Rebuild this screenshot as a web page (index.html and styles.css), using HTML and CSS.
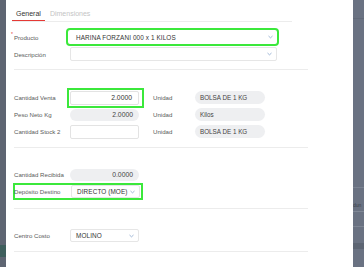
FILE: index.html
```html
<!DOCTYPE html>
<html>
<head>
<meta charset="utf-8">
<link rel="stylesheet" href="styles.css">
</head>
<body>
<div class="page">
  <div class="side side-left">
    <div class="teal"></div>
  </div>
  <div class="modal">
    <div class="tabs">
      <span class="tab active">General</span>
      <span class="tab">Dimensiones</span>
    </div>

    <div class="section s1">
      <div class="row r-prod">
        <span class="label"><span class="req">*</span>Producto</span>
        <div class="select wide hl">HARINA FORZANI 000 x 1 KILOS<svg class="chev" viewBox="0 0 6 4"><path d="M0.6 0.8 L3 3 L5.4 0.8" /></svg></div>
      </div>
      <div class="row r-desc">
        <span class="label">Descripción</span>
        <div class="select wide desc"><svg class="chev" viewBox="0 0 6 4"><path d="M0.6 0.8 L3 3 L5.4 0.8" /></svg></div>
      </div>
    </div>
    <div class="divider"></div>

    <div class="section s2">
      <div class="row">
        <span class="label">Cantidad Venta</span>
        <span class="hlbox"><span class="input num">2.0000</span></span>
        <span class="unit">Unidad</span>
        <span class="pill">BOLSA DE 1 KG</span>
      </div>
      <div class="row">
        <span class="label">Peso Neto Kg</span>
        <span class="ro num">2.0000</span>
        <span class="unit">Unidad</span>
        <span class="pill">Kilos</span>
      </div>
      <div class="row">
        <span class="label">Cantidad Stock 2</span>
        <span class="input num"></span>
        <span class="unit">Unidad</span>
        <span class="pill">BOLSA DE 1 KG</span>
      </div>
    </div>
    <div class="divider"></div>

    <div class="section s3">
      <div class="row">
        <span class="label">Cantidad Recibida</span>
        <span class="ro num">0.0000</span>
      </div>
      <div class="row r-dep">
        <span class="label">Depósito Destino</span>
        <div class="select narrow">DIRECTO (MOE)<svg class="chev" viewBox="0 0 6 4"><path d="M0.6 0.8 L3 3 L5.4 0.8" /></svg></div>
      </div>
    </div>
    <div class="divider"></div>

    <div class="section s4">
      <div class="row">
        <span class="label">Centro Costo</span>
        <div class="select narrow">MOLINO<svg class="chev" viewBox="0 0 6 4"><path d="M0.6 0.8 L3 3 L5.4 0.8" /></svg></div>
      </div>
    </div>
    <div class="divider"></div>
  </div>
  <div class="side side-right">
    <div class="rline l0"></div>
    <div class="rline l1"></div>
    <div class="rtext">dun</div>
    <div class="rline l2"></div>
    <div class="rline l3"></div>
    <div class="rband"></div>
  </div>
</div>
</body>
</html>
```

FILE: styles.css
```css
* { box-sizing: border-box; }
html, body { margin: 0; padding: 0; }
body {
  width: 364px;
  height: 267px;
  overflow: hidden;
  font-family: "Liberation Sans", Arial, sans-serif;
  background: #ffffff;
}
.page {
  display: flex;
  width: 364px;
  height: 267px;
}
.side {
  flex: none;
  height: 267px;
  display: flex;
  flex-direction: column;
}
.side-left {
  width: 6px;
  background: #5e6572;
}
.teal {
  margin-top: 245px;
  height: 12px;
  background: #3f5f5d;
}
.side-right {
  width: 11px;
  background: #6a7282;
}
.rline { height: 1px; background: #7a8291; }
.l0 { margin-top: 18px; background: #626a79; }
.l1 { margin-top: 168px; }
.rtext {
  margin-top: 14px;
  font-size: 5px;
  color: #3a404a;
  line-height: 6px;
  white-space: nowrap;
  overflow: hidden;
}
.l2 { margin-top: 3px; background: #808896; }
.l3 { margin-top: 14px; background: #7d8593; }
.rband {
  margin-top: 16px;
  height: 6px;
  background: #50576480;
}

.modal {
  flex: none;
  width: 347px;
  height: 267px;
  background: #fff;
  padding-left: 6px;
  display: flex;
  flex-direction: column;
}
.tabs {
  width: 280px;
  height: 22px;
  border-bottom: 1px solid #ececec;
  display: flex;
  align-items: flex-end;
  gap: 5px;
}
.tab {
  font-size: 7px;
  color: #c4c4c4;
  height: 12px;
  line-height: 9px;
}
.tab.active {
  color: #333;
  border-bottom: 1px solid #e53935;
  padding: 0 4px 0 4px;
}
.divider {
  margin-left: 2px;
  width: 294px;
  height: 1px;
  background: #ececec;
}
.section {
  margin-left: 2px;
  display: flex;
  flex-direction: column;
}
.row {
  display: grid;
  grid-template-columns: 56px 70px 55px 70px;
  align-items: center;
  height: 17px;
}
.row .unit { margin-left: 13px; }
.label {
  font-size: 6.1px;
  color: #5a5a5a;
  white-space: nowrap;
  position: relative;
}
.req {
  position: absolute;
  left: -3px;
  top: -3px;
  color: #e53935;
  font-size: 5px;
}
.unit {
  font-size: 6.1px;
  color: #5a5a5a;
}
.s1 { margin-top: 6px; }
.r-prod { height: 18px; }
.r-desc { height: 14px; margin-top: 1px; margin-bottom: 8px; }
.select {
  position: relative;
  font-size: 6.4px;
  color: #333;
  border: 1px solid #e6e6e6;
  border-radius: 2px;
  display: flex;
  align-items: center;
  padding-left: 5px;
  white-space: nowrap;
  letter-spacing: 0.1px;
}
.select.wide {
  grid-column: 2 / 5;
  width: 207px;
  height: 14px;
}
.select.hl {
  margin-left: -2px;
  width: 209px;
  border: none;
  outline: 2px solid #3be83b;
  padding-left: 8px;
}
.select.narrow {
  width: 69px;
  height: 13px;
}
.chev {
  position: absolute;
  right: 4px;
  top: 50%;
  width: 5px;
  height: 4px;
  margin-top: -2px;
  fill: none;
  stroke: #7f9fc8;
  stroke-width: 0.9;
}
.s2 { margin-top: 19px; margin-bottom: 7px; }
.hlbox {
  display: block;
  width: 73px;
  height: 16px;
  margin-left: -1px;
  padding: 1px;
  outline: 2px solid #3be83b;
}
.input {
  display: block;
  width: 69px;
  height: 14px;
  border: 1px solid #e3e3e3;
  border-radius: 2px;
  font-size: 6.8px;
  color: #333;
  text-align: right;
  line-height: 12px;
  padding-right: 6px;
}
.ro {
  display: block;
  width: 69px;
  height: 12px;
  border-radius: 6px;
  background: #eeeff1;
  font-size: 6.8px;
  color: #444;
  text-align: right;
  line-height: 12px;
  padding-right: 6px;
}
.pill {
  display: block;
  width: 70px;
  height: 13px;
  border-radius: 7px;
  background: #eeeff1;
  font-size: 6.3px;
  color: #444;
  line-height: 13px;
  padding-left: 5px;
}
.s3 { margin-top: 18px; margin-bottom: 8px; }
.r-dep {
  grid-template-columns: 57px 70px;
  width: 130px;
  margin-left: -1px;
  padding-left: 1px;
  box-shadow: inset 0 0 0 2px #3be83b;
}
.s4 { margin-top: 18px; margin-bottom: 7px; }
```
